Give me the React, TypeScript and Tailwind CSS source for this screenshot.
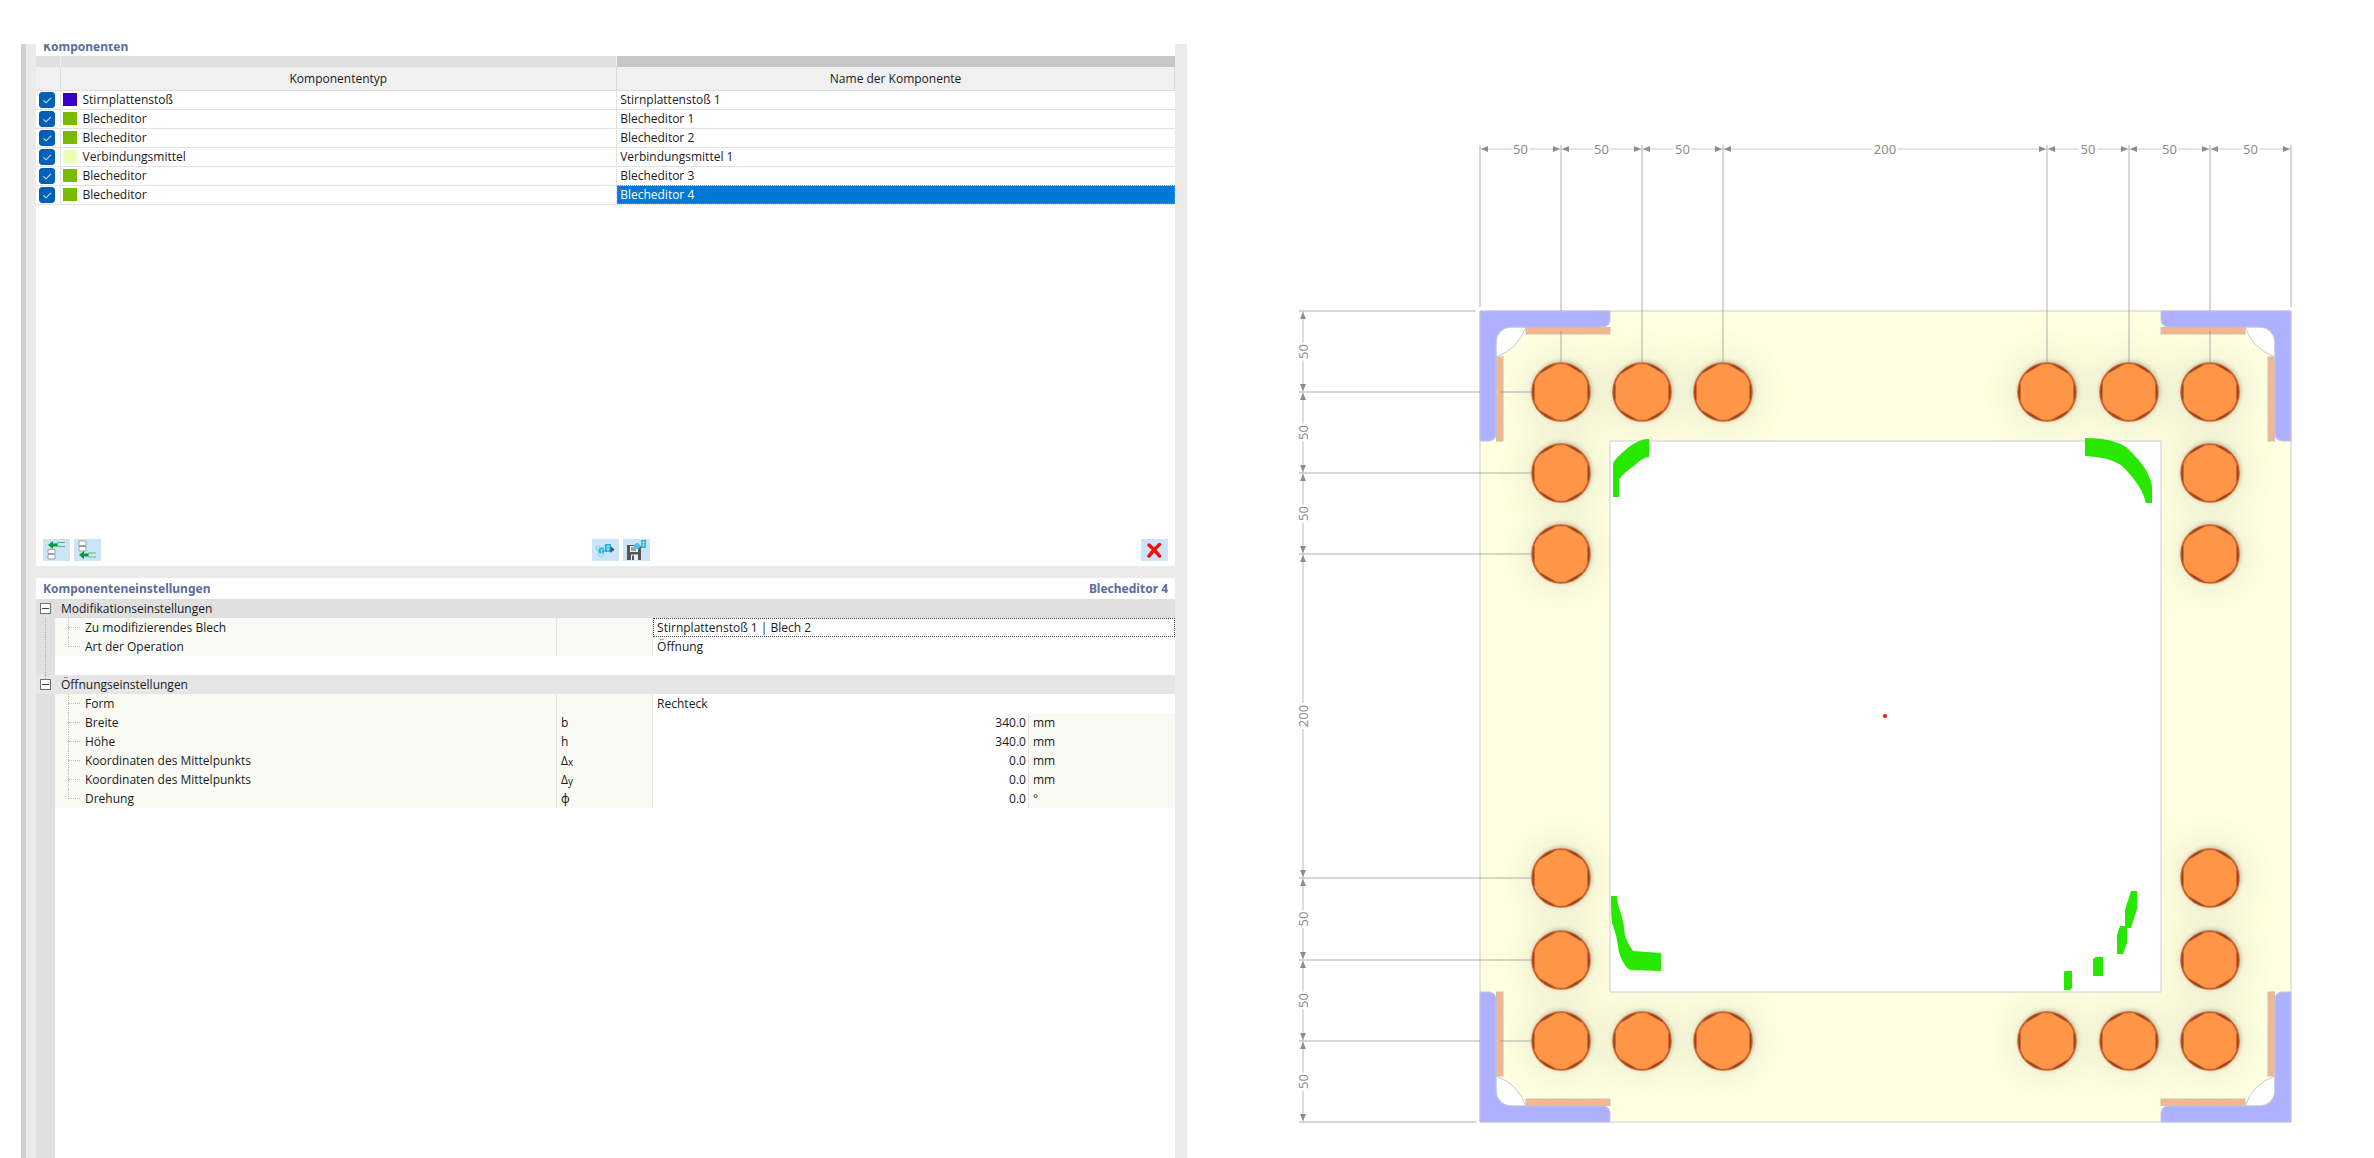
import React from "react";

type Component = { type: string; name: string; swatch: string; selected?: boolean };

const components: Component[] = [
  { type: "Stirnplattenstoß", name: "Stirnplattenstoß 1", swatch: "bg-[#3300cc]" },
  { type: "Blecheditor", name: "Blecheditor 1", swatch: "bg-[#7aba00]" },
  { type: "Blecheditor", name: "Blecheditor 2", swatch: "bg-[#7aba00]" },
  { type: "Verbindungsmittel", name: "Verbindungsmittel 1", swatch: "bg-[#edffb3]" },
  { type: "Blecheditor", name: "Blecheditor 3", swatch: "bg-[#7aba00]" },
  { type: "Blecheditor", name: "Blecheditor 4", swatch: "bg-[#7aba00]", selected: true },
];

type Property = {
  label: string;
  symbol?: React.ReactNode;
  value: string;
  unit?: string;
  focused?: boolean;
};

const modification: Property[] = [
  { label: "Zu modifizierendes Blech", value: "Stirnplattenstoß 1 | Blech 2", focused: true },
  { label: "Art der Operation", value: "Öffnung" },
];

const opening: Property[] = [
  { label: "Form", value: "Rechteck" },
  { label: "Breite", symbol: "b", value: "340.0", unit: "mm" },
  { label: "Höhe", symbol: "h", value: "340.0", unit: "mm" },
  {
    label: "Koordinaten des Mittelpunkts",
    symbol: <>Δ<span className="align-[-1px] text-[10px] leading-none">x</span></>,
    value: "0.0",
    unit: "mm",
  },
  {
    label: "Koordinaten des Mittelpunkts",
    symbol: <>Δ<span className="align-[-1px] text-[10px] leading-none">y</span></>,
    value: "0.0",
    unit: "mm",
  },
  { label: "Drehung", symbol: "ϕ", value: "0.0", unit: "°" },
];

function ToolButton({ label, children }: { label: string; children: React.ReactNode }) {
  return (
    <button type="button" aria-label={label} className="flex h-[22px] w-[27px] items-center justify-center bg-[#cce4f7]">
      <svg viewBox="0 0 27 22" className="h-full w-full">{children}</svg>
    </button>
  );
}

function BuildingCluster() {
  return (
    <>
      <g fill="none" stroke="#7fd0ee" strokeWidth="1">
        <circle cx="6" cy="9" r="2" />
        <circle cx="13" cy="9" r="2" />
        <circle cx="9" cy="15" r="2.5" />
      </g>
      <circle cx="9.500" cy="11.500" r="3" fill="#18b4e0" />
      <path d="M7.500 10l2 1.500 2-1.500M9.500 11.500v3" stroke="#cce4f7" strokeWidth="0.800" fill="none" />
    </>
  );
}

function ComponentTable() {
  return (
    <table className="w-full table-fixed border-collapse">
      <colgroup>
        <col className="w-6" />
        <col />
        <col className="w-[49%]" />
      </colgroup>
      <thead>
        <tr className="h-[11px]">
          <td className="border-r border-[#f0f0f0] bg-[#e0e0e0]" />
          <td className="border-r border-[#f0f0f0] bg-[#e0e0e0]" />
          <td className="bg-[#c6c6c6]" />
        </tr>
        <tr className="h-[23px] border-b border-[#dcdcdc] bg-[#f0f0f0]">
          <th aria-label="Aktiv" className="border-r border-[#dcdcdc]" />
          <th className="border-r border-[#d8d8d8] px-0 pt-0.5 pb-0 font-normal">Komponententyp</th>
          <th className="border-r border-[#d8d8d8] px-0 pt-0.5 pb-0 font-normal">Name der Komponente</th>
        </tr>
      </thead>
      <tbody>
        {components.map((c) => (
          <tr key={c.name} className="h-[19px] border-b border-[#e2e2e2]">
            <td className="border-r border-[#e2e2e2] p-0">
              <label className="relative ml-[3px] block h-4 w-4">
                <input
                  type="checkbox"
                  defaultChecked
                  aria-label={c.name}
                  className="block h-4 w-4 appearance-none rounded-[3px] border border-[#005fb8] checked:bg-[#005fb8] peer"
                />
                <svg viewBox="0 0 16 16" className="pointer-events-none absolute inset-0 hidden h-4 w-4 peer-checked:block">
                  <path d="M4.500 8.300l2.500 2.500 5-5" fill="none" stroke="#cfe2f5" strokeWidth="1.100" />
                </svg>
              </label>
            </td>
            <td className="border-r border-[#e2e2e2] p-0">
              <div className="flex items-center gap-1.5 pl-0.5">
                <span className={"h-[13px] w-[14px] " + c.swatch} />
                <span className="leading-[18px]">{c.type}</span>
              </div>
            </td>
            <td
              className={
                c.selected
                  ? "bg-[#0078d7] px-[3px] py-0 leading-[18px] text-white outline-1 -outline-offset-1 outline-dotted outline-[#c08040]"
                  : "px-[3px] py-0 leading-[18px]"
              }
            >
              {c.name}
            </td>
          </tr>
        ))}
      </tbody>
    </table>
  );
}

function GroupRow({ title, tone, linked }: { title: string; tone: string; linked?: boolean }) {
  return (
    <tr className={"h-[19px] " + tone}>
      <td className="relative p-0">
        {linked && <span className="absolute top-0 left-[9px] h-1 border-l border-dotted border-[#a8a8a8]" />}
        <button type="button" aria-label={title + " einklappen"} className="ml-1 flex h-[11px] w-[11px] items-center justify-center border border-[#707070] bg-white">
          <span className="h-px w-[7px] bg-[#404040]" />
        </button>
      </td>
      <td colSpan={4} className="py-0 pl-1.5 leading-[19px]">{title}</td>
    </tr>
  );
}

function PropertyRow({ item, last, linked }: { item: Property; last: boolean; linked: boolean }) {
  return (
    <tr className="h-[19px]">
      <td className="relative bg-[#e0e0e0] p-0">
        {linked && <span className="absolute inset-y-0 left-[9px] border-l border-dotted border-[#a8a8a8]" />}
      </td>
      <td className="relative border-r border-[#e4e4e0] bg-[#f9faf4] py-0 pl-[30px] leading-[19px]">
        <span
          className={
            last
              ? "absolute top-0 left-[13px] h-[10px] w-3 border-b border-l border-dotted border-[#bdbdbd]"
              : "absolute inset-y-0 left-[13px] w-3 border-l border-dotted border-[#bdbdbd]"
          }
        />
        {!last && <span className="absolute top-[9px] left-[13px] w-3 border-b border-dotted border-[#bdbdbd]" />}
        {item.label}
      </td>
      <td className="border-r border-[#e4e4e0] bg-[#f9faf4] py-0 pl-1 leading-[18px]">{item.symbol}</td>
      {item.unit ? (
        <>
          <td className="border-r border-[#e4e4e0] py-0 pr-0.5 text-right leading-[19px]">{item.value}</td>
          <td className="bg-[#f9faf4] py-0 pl-1 leading-[19px]">{item.unit}</td>
        </>
      ) : (
        <td
          colSpan={2}
          className={
            item.focused
              ? "py-0 pl-1 leading-[19px] outline-1 -outline-offset-1 outline-dotted outline-[#404040]"
              : "py-0 pl-1 leading-[19px]"
          }
        >
          {item.value}
        </td>
      )}
    </tr>
  );
}

function PropertyTable() {
  return (
    <table className="w-full table-fixed border-separate border-spacing-0">
      <colgroup>
        <col className="w-[19px]" />
        <col />
        <col className="w-24" />
        <col className="w-[33%]" />
        <col className="w-[146px]" />
      </colgroup>
      <tbody>
        <GroupRow title="Modifikationseinstellungen" tone="bg-[#e0e0e0]" />
        {modification.map((p, i) => (
          <PropertyRow key={p.label} item={p} last={i === modification.length - 1} linked />
        ))}
        <tr className="h-[19px]">
          <td className="relative bg-[#e0e0e0] p-0">
            <span className="absolute inset-y-0 left-[9px] border-l border-dotted border-[#a8a8a8]" />
          </td>
          <td colSpan={4} />
        </tr>
        <GroupRow title="Öffnungseinstellungen" tone="bg-[#e6e6e6]" linked />
        {opening.map((p, i) => (
          <PropertyRow key={i} item={p} last={i === opening.length - 1} linked={false} />
        ))}
      </tbody>
    </table>
  );
}

// Drawing geometry: plate of 500 mm, drawn 811 units wide
const LEFT = 293;
const TOP = 311;
const SIZE = 811;
const offsets = [81, 162, 243, 567, 649, 730];
const ticks = [0, ...offsets, SIZE];
const spans = ["50", "50", "50", "200", "50", "50", "50"];

const bolts: [number, number][] = [
  ...offsets.map((x): [number, number] => [x, 81]),
  ...offsets.map((x): [number, number] => [x, 730]),
  ...[162, 243, 567, 649].flatMap((y): [number, number][] => [[81, y], [730, y]]),
];

function Bolt({ x, y }: { x: number; y: number }) {
  return (
    <g transform={`translate(${x} ${y})`}>
      <circle r="29.800" fill="#d8652e" />
      <circle r="28.600" fill="#8a4722" />
      <path
        d="M26.800 -9.500V9.500A28.400 28.400 0 0 1 21.600 18.400L5.200 27.900A28.400 28.400 0 0 1 -5.200 27.900L-21.600 18.400A28.400 28.400 0 0 1 -26.800 9.500V-9.500A28.400 28.400 0 0 1 -21.600 -18.400L-5.200 -27.900A28.400 28.400 0 0 1 5.200 -27.900L21.600 -18.400A28.400 28.400 0 0 1 26.800 -9.500Z"
        fill="#e07338"
      />
      <path
        d="M26 -9.500V9.500A27.700 27.700 0 0 1 21.200 17.800L5 27.200A27.700 27.700 0 0 1 -5 27.200L-21.200 17.800A27.700 27.700 0 0 1 -26 9.500V-9.500A27.700 27.700 0 0 1 -21.200 -17.800L-5 -27.200A27.700 27.700 0 0 1 5 -27.200L21.200 -17.800A27.700 27.700 0 0 1 26 -9.500Z"
        fill="#ff9546"
      />
    </g>
  );
}

function Corner({ transform }: { transform: string }) {
  return (
    <g transform={transform}>
      <path d="M16 46V31A15 15 0 0 1 31 16H46A50 50 0 0 1 16 46Z" fill="#ffffff" stroke="#c8c8c8" />
      <rect x="46" y="16.500" width="84" height="6.500" fill="#f6b68c" stroke="#c9bfb4" />
      <rect x="16.500" y="46" width="6.500" height="84" fill="#f6b68c" stroke="#c9bfb4" />
      <path
        d="M0 0H130V9A7 7 0 0 1 123 16H31A15 15 0 0 0 16 31V123A7 7 0 0 1 9 130H0Z"
        fill="#adb1ff"
        stroke="#c4c4d8"
      />
    </g>
  );
}

function Dimensions() {
  return (
    <g fontSize="13" fill="#8c8c8c" textAnchor="middle" className="font-['Noto_Sans',sans-serif]">
      {spans.map((text, i) => {
        const a = ticks[i];
        const b = ticks[i + 1];
        const mid = (a + b) / 2;
        const gap = text.length > 2 ? 13 : 9;
        const line = `M${a} 0H${mid - gap}M${mid + gap} 0H${b}`;
        const heads = `M${a + 1} 0l7 -3v6zM${b - 1} 0l-7 -3v6z`;
        return (
          <React.Fragment key={i}>
            <g transform={`translate(${LEFT} 149)`}>
              <path d={line} stroke="#c8c8c8" />
              <path d={heads} />
              <text x={mid} y="5">{text}</text>
            </g>
            <g transform={`translate(116 ${TOP})`}>
              <path d={line} stroke="#bcbcbc" transform="rotate(90)" />
              <path d={heads} transform="rotate(90)" />
              <text transform={`translate(5 ${mid}) rotate(-90)`}>{text}</text>
            </g>
          </React.Fragment>
        );
      })}
    </g>
  );
}

function PlateDrawing() {
  return (
    <svg viewBox="0 0 1187 1158" className="block h-auto w-full" role="img" aria-label="Stirnplatte mit Öffnung">
      <defs>
        <filter id="soft" x="-100%" y="-100%" width="300%" height="300%">
          <feGaussianBlur stdDeviation="18" />
        </filter>
        <filter id="near" x="-50%" y="-50%" width="200%" height="200%">
          <feGaussianBlur stdDeviation="2" />
        </filter>
        <clipPath id="plate">
          <path clipRule="evenodd" d="M0 0H811V811H0ZM130 130V681H681V130Z" />
        </clipPath>
      </defs>
      <g transform={`translate(${LEFT} ${TOP})`}>
        <path fillRule="evenodd" d="M0 0H811V811H0ZM130 130V681H681V130Z" fill="#ffffe1" />
        <g clipPath="url(#plate)">
          {bolts.map(([x, y]) => (
            <circle key={`${x}-${y}`} cx={x} cy={y} r="38" fill="#c4c4a8" opacity="0.300" filter="url(#soft)" />
          ))}
          {bolts.map(([x, y]) => (
            <circle key={`${x}-${y}`} cx={x + 1} cy={y - 1} r="30" fill="#8f9070" opacity="0.500" filter="url(#near)" />
          ))}
        </g>
        <path d="M0 0H811V811H0ZM130 130V681H681V130Z" fill="none" stroke="#cccccc" />
        <Corner transform="translate(0 0)" />
        <Corner transform="translate(811 0) scale(-1 1)" />
        <Corner transform="translate(0 811) scale(1 -1)" />
        <Corner transform="translate(811 811) scale(-1 -1)" />
        <g stroke="#85858f" strokeOpacity="0.650">
          {offsets.map((x) => (
            <path key={x} d={x === 81 || x === 730 ? `M${x} -166V0M${x} 20V51` : `M${x} -166V51`} />
          ))}
          {offsets.map((y) => (
            <path key={y} d={y === 81 || y === 730 ? `M-181 ${y}H0M20 ${y}H51` : `M-181 ${y}H51`} />
          ))}
          <path d="M0 -166V-4M811 -166V-4M-181 0H-4M-181 811H-4" />
        </g>
        {bolts.map(([x, y]) => (
          <Bolt key={`${x}-${y}`} x={x} y={y} />
        ))}
        <circle cx="405" cy="405" r="2" fill="#ff1010" />
      </g>
      <Dimensions />
      <g fill="#28e800">
        <path d="M426 464Q427 459 442 447Q454 438 462 439H462V457Q456 457 448 465Q435 474 432 480V497H426Z" />
        <path d="M898 438Q925 438 939 447Q952 459 959 470Q964 480 965 486V503H959Q957 495 953 488Q944 474 934 465Q922 457 898 456Z" />
        <path d="M424 896H430Q430 903 435 917Q437 925 438 936Q441 944 446 951L474 953V971L444 970Q440 969 438 965Q432 957 431 946Q430 936 425 923Q424 915 424 896Z" />
        <path d="M944 891H950V909L944 928H938V910Z" />
        <path d="M933 926H940V943L936 954H930V935Z" />
        <path d="M909 957H916V976H906V959Z" />
        <path d="M878 971H885V988L883 990H877V972Z" />
      </g>
    </svg>
  );
}

export default function App() {
  return (
    <div className="flex min-h-screen bg-white font-['Open_Sans','Noto_Sans',sans-serif] text-xs text-[#1a1a1a]">
      <main className="flex w-1/2 pt-11 pl-[21px]">
        <div className="w-[5px] bg-[#d0d0d6]" />
        <div className="flex flex-1 flex-col gap-3 bg-[#ebebeb] pr-3 pl-[10px]">
          <section className="flex h-[522px] flex-col bg-white">
            <div className="flex h-3 items-end overflow-hidden pl-[7px]">
              <h2 className="font-['Noto_Sans',sans-serif] leading-[18px] font-bold text-[#5b6c9a]">Komponenten</h2>
            </div>
            <ComponentTable />
            <div className="mt-auto mb-[5px] flex items-center justify-between px-[7px]">
              <div className="flex gap-1">
                <ToolButton label="Nach oben einfügen">
                  <path d="M5 6l5-4v2.500h4v3h-4v2.500z" fill="#009a44" />
                  <path d="M22 3.500h-7.500v4H22" fill="none" stroke="#52b788" />
                  <path d="M5 10.500h7v4H5zM5 15.500h7v4.500H5z" fill="#fff" stroke="#a0a0a0" />
                </ToolButton>
                <ToolButton label="Nach unten einfügen">
                  <path d="M5 2h7v4.500H5zM5 7.500h7v4.500H5z" fill="#fff" stroke="#a0a0a0" />
                  <path d="M5 16l5-4v2.500h4v3h-4v2.500z" fill="#009a44" />
                  <path d="M22 14h-7.500v4H22" fill="none" stroke="#52b788" />
                </ToolButton>
              </div>
              <div className="flex gap-1">
                <ToolButton label="Aus Bibliothek laden">
                  <BuildingCluster />
                  <path d="M13 5h6v8h-6z" fill="#18b4e0" />
                  <path d="M14 7.500h4M14 10h4M16 5.500v7" stroke="#cce4f7" strokeWidth="0.700" />
                  <path d="M18.500 7l4 3.500-4 3.500z" fill="#505050" />
                </ToolButton>
                <ToolButton label="In Bibliothek speichern">
                  <path d="M4 6h12l2 2v13H4z" fill="#555555" />
                  <path d="M7 7h8v6H7z" fill="#e8f3fb" />
                  <path d="M8 9h5M8 11h5" stroke="#555555" />
                  <path d="M8 15.500h7V21H8z" fill="#e8f3fb" />
                  <path d="M9 16.500h2V21H9z" fill="#555555" />
                  <circle cx="14" cy="7" r="3" fill="#4cc4e8" />
                  <path d="M18 1h5v8h-5z" fill="#18b4e0" />
                  <path d="M18.500 3.500h4M18.500 6h4M20.500 1.500v7" stroke="#cce4f7" strokeWidth="0.700" />
                </ToolButton>
              </div>
              <ToolButton label="Löschen">
                <path d="M8 6Q13 10 18.500 17M18.500 5.500Q12 11 8 17" fill="none" stroke="#fb0505" strokeWidth="3.500" strokeLinecap="round" />
              </ToolButton>
            </div>
          </section>
          <section className="flex flex-1 flex-col bg-white">
            <header className="flex h-[21px] items-center justify-between px-[7px] font-['Noto_Sans',sans-serif] font-bold text-[#5b6c9a]">
              <h2>Komponenteneinstellungen</h2>
              <span>Blecheditor 4</span>
            </header>
            <PropertyTable />
            <div className="w-[19px] flex-1 bg-[#e0e0e0]" />
          </section>
        </div>
      </main>
      <figure className="w-1/2">
        <PlateDrawing />
      </figure>
    </div>
  );
}
